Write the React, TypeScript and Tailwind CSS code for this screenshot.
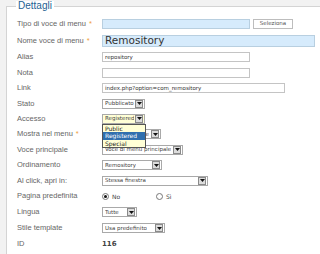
import React from 'react';

const Arrow = () => (
  <span className="ml-auto mr-[1px] flex h-[8px] w-[8px] shrink-0 items-center justify-center border border-[#8a8a8a] bg-[#dcdcdc]">
    <svg width="5" height="3" viewBox="0 0 5 3">
      <path d="M0 0h5L2.5 3z" fill="#111" />
    </svg>
  </span>
);

function Select({ text, w, yellow, right }: { text: string; w: string; yellow?: boolean; right?: boolean }) {
  return (
    <div
      className={`flex h-[10px] items-center border border-[#a9a9a9] pl-[2px] text-[5.5px] text-[#444] ${w} ${
        yellow ? 'bg-[#ffffd6]' : 'bg-white'
      }`}
    >
      <span className={`truncate ${right ? 'ml-auto mr-[2px]' : ''}`}>{text}</span>
      {right ? (
        <span className="mr-[1px] flex h-[8px] w-[8px] shrink-0 items-center justify-center border border-[#8a8a8a] bg-[#dcdcdc]">
          <svg width="5" height="3" viewBox="0 0 5 3">
            <path d="M0 0h5L2.5 3z" fill="#111" />
          </svg>
        </span>
      ) : (
        <Arrow />
      )}
    </div>
  );
}

function Input({ w, text, blue, big }: { w: string; text?: string; blue?: boolean; big?: boolean }) {
  return (
    <div
      className={`flex items-center border pl-[2px] text-[#333] ${w} ${
        blue ? 'border-[#b8cfe0] bg-[#d6ebfc]' : 'border-[#c4c4c4] bg-white'
      } ${big ? 'h-[12px] text-[10.5px]' : 'h-[10px] text-[5.5px]'}`}
    >
      {text}
    </div>
  );
}

function Row({ label, h, req, children }: { label: string; h: string; req?: boolean; children?: React.ReactNode }) {
  return (
    <div className={`flex items-center ${h}`}>
      <div
        className="w-[85px] shrink-0 text-[7.5px] text-[#666]"
        style={{ fontFamily: '"Liberation Sans", Arial, sans-serif' }}
      >
        {label}
        {req && <span className="ml-[3px] text-[#f0a040]">*</span>}
      </div>
      <div className="relative flex items-center gap-[3px]">{children}</div>
    </div>
  );
}

const Radio = ({ on }: { on?: boolean }) => (
  <span className="flex h-[7px] w-[7px] items-center justify-center rounded-full border border-[#777] bg-white">
    {on && <span className="h-[3px] w-[3px] rounded-full bg-[#111]" />}
  </span>
);

export default function App() {
  return (
    <div
      className="h-[254px] w-[320px] overflow-hidden bg-[#f2f2f2] pl-[6px] pt-[6px]"
      style={{ fontFamily: '"DejaVu Sans", Verdana, sans-serif' }}
    >
      <div className="relative h-[260px] w-[330px] border border-[#d4d4d4] bg-white pl-[10px] pt-[8px]">
        <div
          className="absolute left-[9px] top-[-6px] bg-white px-[2px] text-[10px] leading-[10px] text-[#1d5f92]"
          style={{ fontFamily: '"Liberation Sans", Arial, sans-serif' }}
        >
          Dettagli
        </div>
        <Row label="Tipo di voce di menu" req h="h-[17px]">
          <Input w="w-[148px]" blue />
          <div className="flex h-[10px] w-[40px] items-center justify-center border border-[#bdbdbd] bg-white text-[5.5px] text-[#555]">
            Seleziona
          </div>
        </Row>
        <Row label="Nome voce di menu" req h="h-[17px]">
          <Input w="w-[213px]" blue big text="Remository" />
        </Row>
        <Row label="Alias" h="h-[16px]">
          <Input w="w-[148px]" text="repository" />
        </Row>
        <Row label="Nota" h="h-[15px]">
          <Input w="w-[148px]" />
        </Row>
        <Row label="Link" h="h-[16px]">
          <Input w="w-[183px]" text="index.php?option=com_remository" />
        </Row>
        <Row label="Stato" h="h-[15px]">
          <Select text="Pubblicato" w="w-[43px]" />
        </Row>
        <Row label="Accesso" h="h-[15px]">
          <Select text="Registered" w="w-[43px]" yellow />
          <div className="absolute left-0 top-[10px] z-10 w-[44px] border border-[#555] bg-[#ffffd6] text-[6px] leading-[7.5px] text-[#222]">
            <div className="pl-[2px]">Public</div>
            <div className="bg-[#2f6fae] pl-[2px] text-white">Registered</div>
            <div className="pl-[2px]">Special</div>
          </div>
        </Row>
        <Row label="Mostra nel menu" req h="h-[16px]">
          <Select text="le" w="w-[59px]" right />
        </Row>
        <Row label="Voce principale" h="h-[15px]">
          <Select text="Voce di menu principale" w="w-[81px]" />
        </Row>
        <Row label="Ordinamento" h="h-[16px]">
          <Select text="Remository" w="w-[60px]" />
        </Row>
        <Row label="Al click, apri in:" h="h-[15px]">
          <Select text="Stessa finestra" w="w-[106px]" />
        </Row>
        <Row label="Pagina predefinita" h="h-[16px]">
          <div className="flex items-center gap-[3px] text-[6px] text-[#444]">
            <Radio on />
            <span className="w-[41px]">No</span>
            <Radio />
            <span>Sì</span>
          </div>
        </Row>
        <Row label="Lingua" h="h-[16px]">
          <Select text="Tutte" w="w-[35px]" />
        </Row>
        <Row label="Stile template" h="h-[16px]">
          <Select text="Usa predefinito" w="w-[63px]" />
        </Row>
        <Row label="ID" h="h-[16px]">
          <span className="text-[7px] font-bold text-[#444]">116</span>
        </Row>
      </div>
    </div>
  );
}
